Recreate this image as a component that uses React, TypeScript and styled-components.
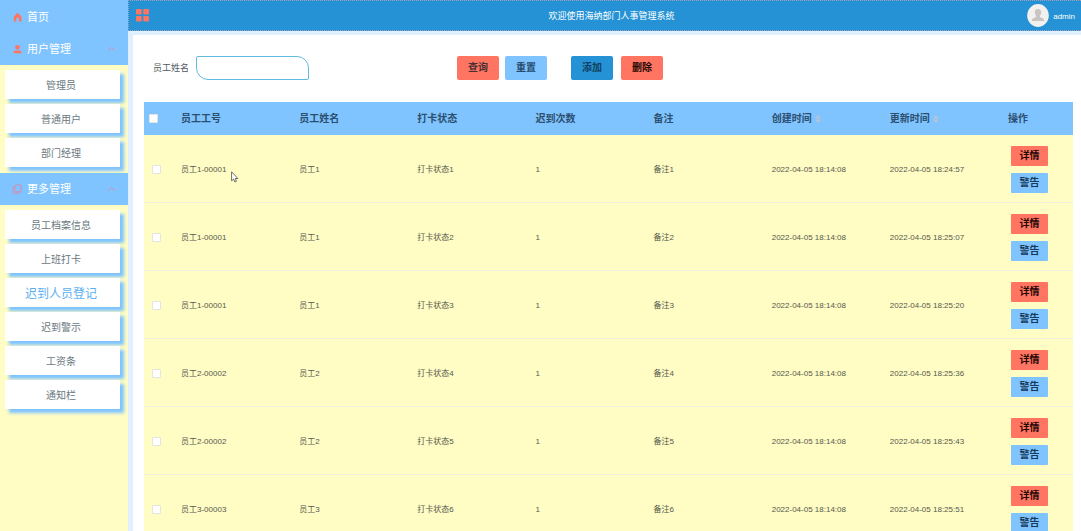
import React from 'react';
import styled, { createGlobalStyle } from 'styled-components';

const colors = {
  sky: '#7fc4ff',
  blue: '#2492d4',
  coral: '#ff7561',
  cream: '#fffcc4',
  pale: '#e0f0ff',
};

const GlobalStyle = createGlobalStyle`
  * { box-sizing: border-box; }
  body {
    margin: 0;
    background: ${colors.pale};
    font-family: "Liberation Sans", "Noto Sans CJK SC", sans-serif;
    font-size: 10px;
    color: #606266;
  }
  button, input { font-family: inherit; }
`;

const Shell = styled.div`
  display: flex;
  height: 100vh;
  overflow: hidden;
`;

const Sidebar = styled.nav`
  flex: 0 0 128px;
  background: ${colors.cream};
  overflow-y: auto;
  scrollbar-width: none;
`;

const MenuHead = styled.button`
  display: flex;
  align-items: center;
  width: 100%;
  height: 32px;
  padding: 0 12px;
  border: 0;
  background: ${colors.sky};
  color: #fff;
  font-size: 11px;
  line-height: 16px;
  text-align: left;
  cursor: pointer;

  span { flex: 1; margin-left: 5px; }
`;

const HomeHead = styled(MenuHead)`
  height: 33px;
`;

const SubMenu = styled.div`
  display: flex;
  flex-direction: column;
  gap: 5px;
  padding: 5px 8px 6px 5px;
`;

const SubItem = styled.a<{ $active?: boolean }>`
  display: flex;
  align-items: center;
  justify-content: center;
  height: 29px;
  padding-right: 3px;
  background: #fff;
  box-shadow: 4px 4px 3px ${colors.sky};
  color: ${p => (p.$active ? '#5cb0f2' : '#6a7880')};
  font-size: ${p => (p.$active ? 12 : 10)}px;
  text-decoration: none;
`;

const Page = styled.div`
  flex: 1;
  min-width: 0;
  display: flex;
  flex-direction: column;
`;

const TopBar = styled.header`
  display: flex;
  align-items: center;
  justify-content: space-between;
  height: 31px;
  flex: none;
  padding: 0 6px 0 7px;
  background: ${colors.blue};
  border: 1px dotted #a3a0b8;
  border-right: 0;
  color: #fff;
`;

const IconButton = styled.button`
  display: flex;
  padding: 0;
  border: 0;
  background: none;
  cursor: pointer;
`;

const Title = styled.h1`
  margin: 0;
  padding-left: 12px;
  font-size: 9px;
  font-weight: 400;
`;

const Side = styled.div`
  flex: 1;
  display: flex;
`;

const User = styled(Side)`
  justify-content: flex-end;
  align-items: center;
  gap: 4px;
  font-size: 8px;
  line-height: 12px;

  span { padding-top: 3px; }
`;

const Content = styled.main`
  flex: 1;
  min-height: 0;
  margin: 4px 0 0 5px;
  padding: 21px 8px 0 11px;
  background: #fff;
  overflow-y: auto;
  scrollbar-width: none;
`;

const SearchBar = styled.form`
  display: flex;
  align-items: center;
  height: 24px;
  margin-bottom: 22px;
  padding-left: 9px;
`;

const Field = styled.label`
  display: flex;
  align-items: center;
  gap: 7px;
  margin-right: 148px;
  font-size: 9px;
  line-height: 16px;
  color: #505860;
`;

const TextInput = styled.input`
  width: 113px;
  height: 24px;
  padding: 0 8px;
  border: 1px solid #62bbdf;
  border-radius: 2px 12px 2px 12px;
  outline: 0;
  font-size: 9px;
`;

const ButtonGroup = styled.div`
  display: flex;
  gap: 6px;

  & + & { margin-left: 24px; gap: 8px; }
`;

const Button = styled.button<{ $bg: string; $ink: string }>`
  width: 42px;
  height: 24px;
  padding: 0;
  border: 0;
  border-radius: 2px;
  background: ${p => p.$bg};
  color: ${p => p.$ink};
  font-size: 10px;
  font-weight: 700;
  line-height: 16px;
  cursor: pointer;
`;

const RowButton = styled(Button)`
  display: block;
  width: 37px;
  height: 20px;
  border-radius: 1px;

  & + & { margin-top: 7px; }
`;

const Table = styled.table`
  width: 100%;
  table-layout: fixed;
  border-collapse: separate;
  border-spacing: 0;
  font-size: 8px;

  th, td { padding: 0 0 0 8px; text-align: left; }
  th {
    height: 33px;
    background: ${colors.sky};
    color: #2c4f70;
    font-size: 10px;
    font-weight: 700;
    line-height: 16px;
  }
  td {
    height: 68px;
    padding-top: 2px;
    background: ${colors.cream};
    border-bottom: 1px solid #eef0dc;
    color: #55594e;
    line-height: 12px;
  }
  th:first-child { padding-left: 5px; }
  td:last-child { padding-left: 11px; }
`;

const CheckCol = styled.col`width: 29px;`;
const ActionCol = styled.col`width: 73px;`;

const Check = styled.input`
  display: block;
  appearance: none;
  width: 9px;
  height: 9px;
  margin: 0;
  border: 1px solid #e3e5e4;
  border-radius: 1px;
  background: #fff;
`;

const SortLabel = styled.span`
  display: flex;
  align-items: center;
  gap: 3px;
`;

const Pointer = styled.svg`
  position: absolute;
  left: 231px;
  top: 171px;
  pointer-events: none;
`;

const HomeIcon = () => (
  <svg width="10" height="10" viewBox="0 0 10 10" aria-hidden="true">
    <path d="M5.500.8 9.500 4.600V9q0 .5-.5.5H7V6.800a1.300 1.300 0 0 0-2.700 0v2.700H2.300q-.5 0-.5-.5V4.600Z" fill={colors.coral} />
  </svg>
);

const UserIcon = () => (
  <svg width="10" height="10" viewBox="0 0 10 10" aria-hidden="true">
    <circle cx="5.500" cy="3.200" r="2.300" fill={colors.coral} />
    <path d="M1.500 9.200V8q0-1.600 1.800-1.600h4.400Q9.500 6.400 9.500 8v1.200Z" fill={colors.coral} />
  </svg>
);

const CopyIcon = () => (
  <svg width="10" height="10" viewBox="0 0 10 10" fill="none" stroke="#d98aac" aria-hidden="true">
    <rect x="3" y="1" width="6.300" height="6.800" rx="1.200" />
    <path d="M3 2.500H1.900q-.9 0-.9.9v5q0 .9.900.9h4.600q.9 0 .9-.9v-.6" />
  </svg>
);

const Chevron = () => (
  <svg width="9" height="6" viewBox="0 0 9 6" fill="none" stroke="#dc8bb0" aria-hidden="true">
    <path d="M1 5 4.500 1.500 8 5" />
  </svg>
);

const GridIcon = () => (
  <svg width="13" height="13" viewBox="0 0 13 13" fill={colors.coral} aria-hidden="true">
    <rect width="5.600" height="5.400" rx=".7" />
    <rect x="7.300" width="5.600" height="5.400" rx=".7" />
    <rect y="7" width="5.600" height="5.400" rx=".7" />
    <rect x="7.300" y="7" width="5.600" height="5.400" rx=".7" />
  </svg>
);

const Avatar = () => (
  <svg width="22" height="23" viewBox="0 0 22 23" aria-hidden="true">
    <ellipse cx="11" cy="11.500" rx="10.800" ry="11.400" fill="#f2f1f0" />
    <path d="M7.800 8.500a3.200 3.500 0 0 1 6.400 0q0 2-1.300 3.300v1.300l3.100 1.400q1.200.6 1.200 2.500H4.800q0-1.900 1.200-2.500l3.100-1.400v-1.300Q7.800 10.500 7.800 8.500Z" fill="#c6c5c4" />
  </svg>
);

const SortIcon = () => (
  <svg width="6" height="8" viewBox="0 0 6 8" fill="#b9c4d2" aria-hidden="true">
    <path d="M3 0 5.800 3.400H.2ZM3 8 .2 4.600h5.600Z" />
  </svg>
);

const people = ['管理员', '普通用户', '部门经理'];
const more = ['员工档案信息', '上班打卡', '迟到人员登记', '迟到警示', '工资条', '通知栏'];

const rows = [
  ['员工1-00001', '员工1', '打卡状态1', '1', '备注1', '2022-04-05 18:14:08', '2022-04-05 18:24:57'],
  ['员工1-00001', '员工1', '打卡状态2', '1', '备注2', '2022-04-05 18:14:08', '2022-04-05 18:25:07'],
  ['员工1-00001', '员工1', '打卡状态3', '1', '备注3', '2022-04-05 18:14:08', '2022-04-05 18:25:20'],
  ['员工2-00002', '员工2', '打卡状态4', '1', '备注4', '2022-04-05 18:14:08', '2022-04-05 18:25:36'],
  ['员工2-00002', '员工2', '打卡状态5', '1', '备注5', '2022-04-05 18:14:08', '2022-04-05 18:25:43'],
  ['员工3-00003', '员工3', '打卡状态6', '1', '备注6', '2022-04-05 18:14:08', '2022-04-05 18:25:51'],
];

export default function App() {
  return (
    <>
      <GlobalStyle />
      <Shell>
        <Sidebar>
          <HomeHead type="button"><HomeIcon /><span>首页</span></HomeHead>
          <MenuHead type="button"><UserIcon /><span>用户管理</span><Chevron /></MenuHead>
          <SubMenu>
            {people.map(name => <SubItem key={name} href="#">{name}</SubItem>)}
          </SubMenu>
          <MenuHead type="button"><CopyIcon /><span>更多管理</span><Chevron /></MenuHead>
          <SubMenu>
            {more.map(name => (
              <SubItem key={name} href="#" $active={name === '迟到人员登记'}>{name}</SubItem>
            ))}
          </SubMenu>
        </Sidebar>
        <Page>
          <TopBar>
            <Side><IconButton type="button" aria-label="菜单"><GridIcon /></IconButton></Side>
            <Title>欢迎使用海纳部门人事管理系统</Title>
            <User><Avatar /><span>admin</span></User>
          </TopBar>
          <Content>
            <SearchBar onSubmit={e => e.preventDefault()}>
              <Field htmlFor="name">员工姓名<TextInput id="name" type="text" /></Field>
              <ButtonGroup>
                <Button type="submit" $bg={colors.coral} $ink="#4a2f35">查询</Button>
                <Button type="reset" $bg={colors.sky} $ink="#254a6c">重置</Button>
              </ButtonGroup>
              <ButtonGroup>
                <Button type="button" $bg={colors.blue} $ink="#123f60">添加</Button>
                <Button type="button" $bg={colors.coral} $ink="#1f0806">删除</Button>
              </ButtonGroup>
            </SearchBar>
            <Table>
              <colgroup>
                <CheckCol />
                <col /><col /><col /><col /><col /><col /><col />
                <ActionCol />
              </colgroup>
              <thead>
                <tr>
                  <th><Check type="checkbox" aria-label="全选" /></th>
                  <th>员工工号</th>
                  <th>员工姓名</th>
                  <th>打卡状态</th>
                  <th>迟到次数</th>
                  <th>备注</th>
                  <th><SortLabel>创建时间<SortIcon /></SortLabel></th>
                  <th><SortLabel>更新时间<SortIcon /></SortLabel></th>
                  <th>操作</th>
                </tr>
              </thead>
              <tbody>
                {rows.map(row => (
                  <tr key={row[2]}>
                    <td><Check type="checkbox" aria-label={row[2]} /></td>
                    {row.map((cell, i) => <td key={i}>{cell}</td>)}
                    <td>
                      <RowButton type="button" $bg={colors.coral} $ink="#1f0806">详情</RowButton>
                      <RowButton type="button" $bg={colors.sky} $ink="#173a5a">警告</RowButton>
                    </td>
                  </tr>
                ))}
              </tbody>
            </Table>
          </Content>
        </Page>
      </Shell>
      <Pointer width="8" height="12" viewBox="0 0 8 12" aria-hidden="true">
        <path d="M.6.8v9l2-1.700 1.300 2.900 1.500-.7L4.200 7.500h2.700Z" fill="#fff" stroke="#4a4a48" strokeWidth=".8" />
      </Pointer>
    </>
  );
}
